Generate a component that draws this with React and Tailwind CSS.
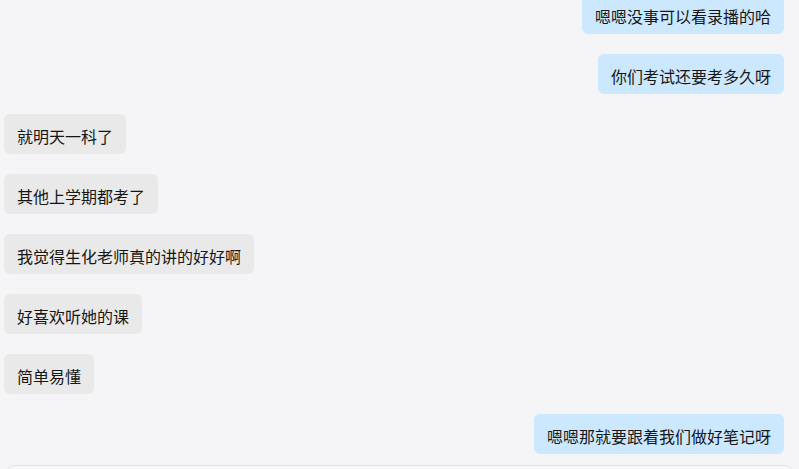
const messages = [
  { side: 'right', text: '嗯嗯没事可以看录播的哈' },
  { side: 'right', text: '你们考试还要考多久呀' },
  { side: 'left', text: '就明天一科了' },
  { side: 'left', text: '其他上学期都考了' },
  { side: 'left', text: '我觉得生化老师真的讲的好好啊' },
  { side: 'left', text: '好喜欢听她的课' },
  { side: 'left', text: '简单易懂' },
  { side: 'right', text: '嗯嗯那就要跟着我们做好笔记呀' },
];

const Bubble = ({ side, text }) => {
  const mine = side === 'right';
  return (
    <div className={mine ? 'flex justify-end' : 'flex justify-start'}>
      <div
        className={
          mine
            ? 'rounded-md bg-[#cce8ff] px-[13px] pt-[10px] pb-[6px] text-base leading-6 text-[#161616]'
            : 'rounded-md bg-[#e9e9e9] px-[13px] pt-[10px] pb-[6px] text-base leading-6 text-[#161616]'
        }
      >
        {text}
      </div>
    </div>
  );
};

export default function App() {
  return (
    <div
      className="h-[469px] w-full overflow-hidden bg-[#f5f5f7]"
      style={{ fontFamily: '"Microsoft YaHei", "Noto Sans CJK SC", sans-serif' }}
    >
      <div className="-mt-[6px] flex flex-col gap-5 pl-1 pr-[15px]">
        {messages.map((m, i) => (
          <Bubble key={i} side={m.side} text={m.text} />
        ))}
      </div>
      <div className="mx-[6px] mt-[11px] h-20 rounded-lg border border-[#e3e3e3] bg-[#f7f7f9]" />
    </div>
  );
}
